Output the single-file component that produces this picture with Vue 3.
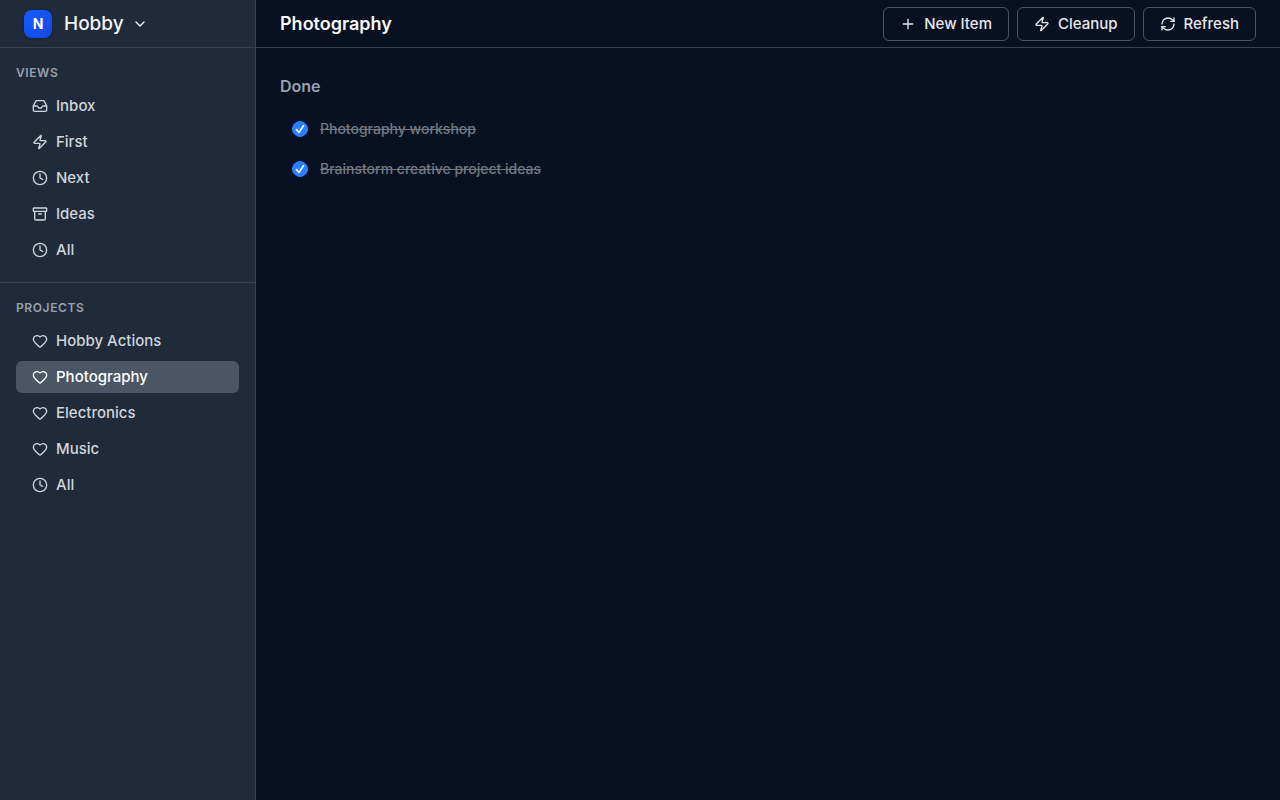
<script setup>
import { ref } from 'vue'

const icons = {
  inbox: ['M22 12h-6l-2 3h-4l-2-3H2', 'M5.45 5.11 2 12v6a2 2 0 0 0 2 2h16a2 2 0 0 0 2-2v-6l-3.45-6.89A2 2 0 0 0 16.76 4H7.24a2 2 0 0 0-1.79 1.11z'],
  zap: ['M4 14a1 1 0 0 1-.78-1.63l9.9-10.2a.5.5 0 0 1 .86.46l-1.92 6.02A1 1 0 0 0 13 10h7a1 1 0 0 1 .78 1.63l-9.9 10.2a.5.5 0 0 1-.86-.46l1.92-6.02A1 1 0 0 0 11 14z'],
  clock: ['M12 2a10 10 0 1 0 0 20 10 10 0 1 0 0-20z', 'M12 6v6l4 2'],
  archive: ['M3 3h18a1 1 0 0 1 1 1v3a1 1 0 0 1-1 1H3a1 1 0 0 1-1-1V4a1 1 0 0 1 1-1z', 'M4 8v11a2 2 0 0 0 2 2h12a2 2 0 0 0 2-2V8', 'M10 12h4'],
  heart: ['M2 9.5a5.5 5.5 0 0 1 9.591-3.676.56.56 0 0 0 .818 0A5.49 5.49 0 0 1 22 9.5c0 2.29-1.5 4-3 5.5l-5.492 5.313a2 2 0 0 1-3 .019L5 15c-1.5-1.5-3-3.2-3-5.5'],
  plus: ['M5 12h14', 'M12 5v14'],
  refresh: ['M3 12a9 9 0 0 1 9-9 9.75 9.75 0 0 1 6.74 2.74L21 8', 'M21 3v5h-5', 'M21 12a9 9 0 0 1-9 9 9.75 9.75 0 0 1-6.74-2.74L3 16', 'M8 16H3v5'],
  chevron: ['m6 9 6 6 6-6'],
}

const sections = [
  {
    title: 'Views',
    items: [
      { label: 'Inbox', icon: 'inbox' },
      { label: 'First', icon: 'zap' },
      { label: 'Next', icon: 'clock' },
      { label: 'Ideas', icon: 'archive' },
      { label: 'All', icon: 'clock' },
    ],
  },
  {
    title: 'Projects',
    items: [
      { label: 'Hobby Actions', icon: 'heart' },
      { label: 'Photography', icon: 'heart', active: true },
      { label: 'Electronics', icon: 'heart' },
      { label: 'Music', icon: 'heart' },
      { label: 'All', icon: 'clock' },
    ],
  },
]

const actions = [
  { label: 'New Item', icon: 'plus' },
  { label: 'Cleanup', icon: 'zap' },
  { label: 'Refresh', icon: 'refresh' },
]

const tasks = ref([
  { id: 'task-1', title: 'Photography workshop', done: true },
  { id: 'task-2', title: 'Brainstorm creative project ideas', done: true },
])
</script>

<template>
  <div class="app">
    <aside class="sidebar">
      <header class="brand">
        <button class="switcher" type="button">
          <span class="logo">N</span>
          <span class="workspace">Hobby</span>
          <svg class="icon" viewBox="0 0 24 24" aria-hidden="true">
            <path v-for="d in icons.chevron" :key="d" :d="d" />
          </svg>
        </button>
      </header>
      <nav v-for="section in sections" :key="section.title" class="section">
        <h2 class="section-title">{{ section.title }}</h2>
        <ul class="links">
          <li v-for="item in section.items" :key="item.label">
            <a href="#" class="link" :class="{ active: item.active }">
              <svg class="icon" viewBox="0 0 24 24" aria-hidden="true">
                <path v-for="d in icons[item.icon]" :key="d" :d="d" />
              </svg>
              {{ item.label }}
            </a>
          </li>
        </ul>
      </nav>
    </aside>

    <main class="main">
      <header class="topbar">
        <h1 class="title">Photography</h1>
        <div class="actions">
          <button v-for="action in actions" :key="action.label" class="action" type="button">
            <svg class="icon" viewBox="0 0 24 24" aria-hidden="true">
              <path v-for="d in icons[action.icon]" :key="d" :d="d" />
            </svg>
            {{ action.label }}
          </button>
        </div>
      </header>
      <section class="content">
        <h2 class="group-title">Done</h2>
        <ul class="tasks">
          <li v-for="task in tasks" :key="task.id" class="task">
            <span class="check">
              <input :id="task.id" v-model="task.done" class="box" type="checkbox" />
              <svg v-if="task.done" class="tick" viewBox="0 0 16 16" aria-hidden="true">
                <path d="M4.4 8.6 7 11.4l4.6-6.8" />
              </svg>
            </span>
            <label :for="task.id" class="task-title" :class="{ done: task.done }">{{ task.title }}</label>
          </li>
        </ul>
      </section>
    </main>
  </div>
</template>

<style>
body {
  margin: 0;
  background: #081122;
}
</style>

<style scoped>
.app {
  display: flex;
  min-height: 100vh;
  font-family: Inter, "Liberation Sans", sans-serif;
  font-size: 15px;
  font-weight: 500;
  line-height: 24px;
  color: #d1d5dc;
}
h1, h2, ul {
  margin: 0;
  padding: 0;
}
ul {
  list-style: none;
}
button {
  font: inherit;
  color: inherit;
  background: none;
  border: 0;
  padding: 0;
  cursor: pointer;
}
.icon {
  flex: none;
  width: 16px;
  height: 16px;
  fill: none;
  stroke: currentColor;
  stroke-width: 2;
  stroke-linecap: round;
  stroke-linejoin: round;
}
.sidebar {
  box-sizing: border-box;
  flex: none;
  width: 256px;
  background: #1f2a3a;
  border-right: 1px solid #364153;
}
.brand, .topbar {
  box-sizing: border-box;
  display: flex;
  align-items: center;
  height: 48px;
  padding: 0 24px;
  border-bottom: 1px solid #364153;
}
.switcher {
  display: flex;
  align-items: center;
  color: #f3f4f6;
}
.logo {
  display: grid;
  place-items: center;
  width: 28px;
  height: 28px;
  margin-right: 12px;
  border-radius: 8px;
  background: linear-gradient(135deg, #155dfc, #1447e6);
  box-shadow: 0 1px 3px rgba(0, 0, 0, 0.2);
  color: #fff;
  font-size: 14px;
  font-weight: 700;
}
.workspace {
  margin-right: 8px;
  font-size: 19px;
}
.section {
  padding: 16px;
}
.section + .section {
  border-top: 1px solid #364153;
}
.section-title {
  margin-bottom: 8px;
  color: #99a1af;
  font-size: 12px;
  line-height: 18px;
  font-weight: 600;
  letter-spacing: 0.05em;
  text-transform: uppercase;
}
.links {
  display: grid;
  gap: 4px;
}
.link {
  display: flex;
  align-items: center;
  gap: 8px;
  padding: 4px 16px;
  border-radius: 6px;
  color: #d1d5dc;
  text-decoration: none;
}
.link.active {
  background: #4a5565;
  color: #fff;
}
.main {
  flex: 1;
  min-width: 0;
  background: #081122;
}
.topbar {
  justify-content: space-between;
}
.title {
  color: #f9fafb;
  font-size: 18px;
  font-weight: 600;
}
.actions {
  display: flex;
  gap: 8px;
}
.action {
  display: flex;
  align-items: center;
  gap: 8px;
  padding: 4px 16px;
  border: 1px solid #4a5565;
  border-radius: 6px;
  color: #e5e7eb;
}
.content {
  padding: 24px;
}
.group-title {
  margin-bottom: 13px;
  color: #99a1af;
  font-size: 16px;
  line-height: 28px;
  font-weight: 600;
}
.tasks {
  display: grid;
  gap: 8px;
  padding: 0 12px;
}
.task {
  display: flex;
  align-items: center;
  gap: 12px;
  min-height: 32px;
}
.check {
  position: relative;
  display: flex;
}
.box {
  appearance: none;
  width: 16px;
  height: 16px;
  margin: 0;
  border: 1px solid #4a5565;
  border-radius: 50%;
}
.box:checked {
  border-color: #2b7fff;
  background: #2b7fff;
}
.tick {
  position: absolute;
  inset: 0;
  fill: none;
  stroke: #fff;
  stroke-width: 1.6;
  stroke-linecap: round;
  stroke-linejoin: round;
  pointer-events: none;
}
.task-title {
  font-size: 14px;
  line-height: 20px;
}
.task-title.done {
  color: #737984;
  text-decoration: line-through;
}
</style>
